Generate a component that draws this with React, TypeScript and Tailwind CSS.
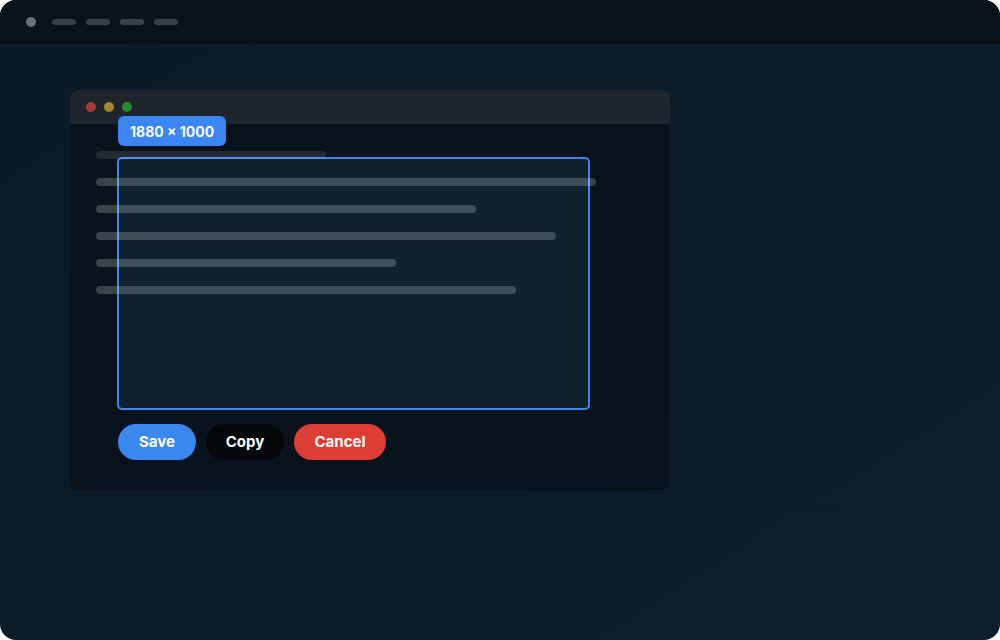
export default function App() {
  const lines = [
    { w: 230, c: "bg-white/10" },
    { w: 500, c: "bg-white/20" },
    { w: 380, c: "bg-white/20" },
    { w: 460, c: "bg-white/20" },
    { w: 300, c: "bg-white/20" },
    { w: 420, c: "bg-white/20" },
  ];
  return (
    <div className="bg-white w-[1000px] h-[640px]" style={{ fontFamily: "Inter, 'Liberation Sans', sans-serif" }}>
      <div className="w-full h-full rounded-[16px] overflow-hidden flex flex-col bg-gradient-to-br from-[#0b1a27] to-[#0c1e2c]">
        <div className="h-[44px] shrink-0 bg-[#0a121a] flex items-center pl-[26px] gap-[10px]">
          <div className="w-[10px] h-[10px] rounded-full bg-[#6b7076] mr-[6px]" />
          <div className="w-[24px] h-[6px] rounded-full bg-[#3a4047]" />
          <div className="w-[24px] h-[6px] rounded-full bg-[#3a4047]" />
          <div className="w-[24px] h-[6px] rounded-full bg-[#3a4047]" />
          <div className="w-[24px] h-[6px] rounded-full bg-[#3a4047]" />
        </div>
        <div className="pl-[70px] pt-[46px]">
          <div className="relative w-[600px] h-[400px] rounded-[8px] overflow-hidden bg-[#0a131b] flex flex-col">
            <div className="h-[34px] shrink-0 bg-[#1e252d] flex items-center pl-[16px] gap-[8px]">
              <div className="w-[10px] h-[10px] rounded-full bg-[#a83a3a]" />
              <div className="w-[10px] h-[10px] rounded-full bg-[#a8862a]" />
              <div className="w-[10px] h-[10px] rounded-full bg-[#2a8a32]" />
            </div>
            <div className="absolute left-[47px] top-[67px] w-[473px] h-[253px] rounded-[5px] border-[2.5px] border-[#3d86f5] bg-[#10222f]" />
            <div className="relative flex flex-col gap-[19px] pl-[26px] pt-[27px]">
              {lines.map((l, i) => (
                <div key={i} className={`h-[8px] rounded-full ${l.c}`} style={{ width: l.w }} />
              ))}
            </div>
            <div className="absolute left-[48px] top-[26px] h-[30px] px-[12px] rounded-[6px] bg-[#3b86f2] flex items-center text-white text-[14px] font-bold">
              1880 × 1000
            </div>
            <div className="flex gap-[10px] pl-[48px] mt-[130px]">
              <button className="w-[78px] h-[36px] rounded-full bg-[#3b87f0] text-white text-[15px] font-bold">Save</button>
              <button className="w-[78px] h-[36px] rounded-full bg-[#05080b] text-white text-[15px] font-bold">Copy</button>
              <button className="w-[92px] h-[36px] rounded-full bg-[#dc3d35] text-white text-[15px] font-bold">Cancel</button>
            </div>
          </div>
        </div>
      </div>
    </div>
  );
}
